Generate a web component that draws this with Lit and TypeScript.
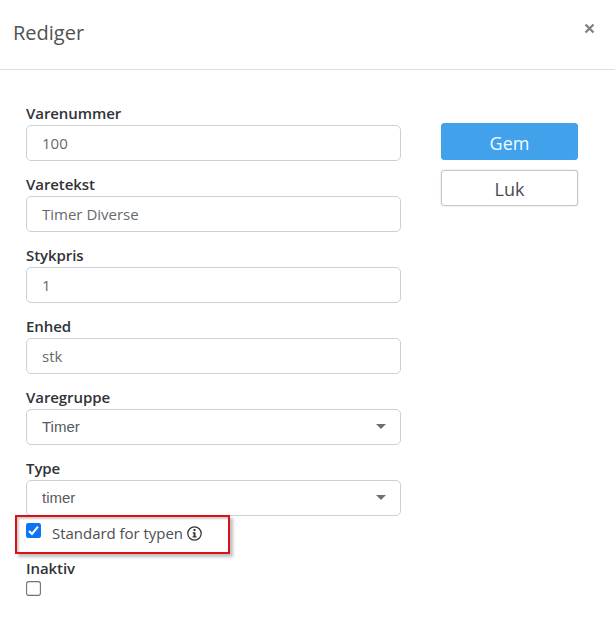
import { LitElement, html, css, svg } from "lit";
import { customElement, property } from "lit/decorators.js";

@customElement("form-field")
class FormField extends LitElement {
  @property() label = "";
  @property() value = "";
  @property({ type: Boolean }) select = false;

  static styles = css`
    :host { display: block; height: 56px; }
    .label { height: 20px; line-height: 16px; font-weight: 600; font-size: 15px; color: #303337; letter-spacing: -0.08px; white-space: nowrap; }
    .control { box-sizing: border-box; height: 36px; border: 1px solid #cdd0d2; border-radius: 5px; background: #fff; padding: 0 14px 0 15px; display: flex; align-items: center; justify-content: space-between; font-size: 15px; color: #65696d; }
    .select { font-family: "Liberation Sans", Arial, sans-serif; color: #565b60; padding-bottom: 1px; }
    .text { line-height: 20px; }
    .select .text { line-height: 17px; padding-bottom: 1px; }
    .arrow { width: 10px; height: 5px; display: block; }
  `;

  render() {
    return html`
      <div class="label">${this.label}</div>
      <div class="control ${this.select ? "select" : ""}">
        <span class="text">${this.value}</span>
        ${this.select
          ? html`<svg class="arrow" viewBox="0 0 10 5"><path d="M0 0h10L5 5z" fill="#6a7278" /></svg>`
          : ""}
      </div>
    `;
  }
}

@customElement("check-box")
class CheckBox extends LitElement {
  @property({ type: Boolean }) checked = false;

  static styles = css`
    :host { display: block; width: 15px; height: 15px; }
    svg { display: block; }
  `;

  render() {
    return html`<svg width="15" height="15" viewBox="0 0 15 15">
      ${this.checked
        ? svg`<rect width="15" height="15" rx="2.2" fill="#0a75f5" /><path d="M3 7.9l3 3.1 6-7.3" fill="none" stroke="#fff" stroke-width="2.1" />`
        : svg`<rect x=".6" y=".6" width="13.8" height="13.8" rx="2.2" fill="#fff" stroke="#707274" stroke-width="1.1" />`}
    </svg>`;
  }
}

@customElement("app-root")
class AppRoot extends LitElement {
  static styles = css`
    :host { display: block; box-sizing: border-box; height: 633px; overflow: hidden; background: #fff; font-family: "Open Sans", sans-serif; color: #4b4f53; }
    .header { box-sizing: border-box; height: 70px; border-bottom: 1px solid #dcdedf; display: flex; justify-content: space-between; padding: 18px 20px 0 13px; }
    .title { font-size: 20px; line-height: 29px; color: #505255; }
    .close { width: 11px; height: 11px; margin-top: 5px; display: block; }
    .body { display: flex; padding: 35px 37px 0 26px; gap: 40px; }
    .fields { width: 375px; display: flex; flex-direction: column; }
    form-field { margin-bottom: 15px; }
    form-field.last { margin-bottom: 0; }
    .highlight { box-sizing: border-box; width: 215px; height: 39px; margin: -1px 0 0 -11px; border: 2px solid #d81218; box-shadow: 3px 3px 3px rgba(0, 0, 0, .25), inset 2px 2px 2px rgba(0, 0, 0, .2); display: flex; padding: 6px 0 0 9px; position: relative; }
    .standard { font-size: 15px; line-height: 21px; margin-left: 11px; white-space: nowrap; letter-spacing: -0.03px; }
    .info { width: 15px; height: 15px; margin: 3px 0 0 3.5px; }
    .inactive { margin-top: 5px; height: 22px; line-height: 18px; font-size: 15px; font-weight: 600; color: #303337; letter-spacing: -0.08px; }
    .actions { width: 137px; padding-top: 18px; display: flex; flex-direction: column; gap: 10px; }
    .button { box-sizing: border-box; height: 36px; border: 1px solid #c5c6c8; border-radius: 3px; background: #fff; color: #484b4f; font: 18px/24px "Open Sans", sans-serif; padding: 1px 0 0; text-align: center; box-shadow: 0 0 2px rgba(0, 0, 0, .18); }
    .primary { height: 37px; padding-top: 2px; background: #42a1eb; border-color: #42a1eb; color: #effcff; box-shadow: none; font-weight: 500; }
  `;

  render() {
    return html`
      <div class="header">
        <div class="title">Rediger</div>
        <svg class="close" viewBox="0 0 11 11"><path d="M1.5 1.5l8 8M9.5 1.5l-8 8" stroke="#808080" stroke-width="2.3" /></svg>
      </div>
      <div class="body">
        <div class="fields">
          <form-field label="Varenummer" value="100"></form-field>
          <form-field label="Varetekst" value="Timer Diverse"></form-field>
          <form-field label="Stykpris" value="1"></form-field>
          <form-field label="Enhed" value="stk"></form-field>
          <form-field label="Varegruppe" value="Timer" select></form-field>
          <form-field class="last" label="Type" value="timer" select></form-field>
          <div class="highlight">
            <check-box checked></check-box>
            <span class="standard">Standard for typen</span>
            <svg class="info" viewBox="0 0 15 15">
              <circle cx="7.5" cy="7.5" r="6.7" fill="none" stroke="#303236" stroke-width="1.25" />
              <path d="M6.5 3h2v2h-2zM5.7 6.2h2.8v4h1v1.2H5.6v-1.2h1V7.4h-.9z" fill="#303236" />
            </svg>
          </div>
          <div class="inactive">Inaktiv</div>
          <check-box></check-box>
        </div>
        <div class="actions">
          <button class="button primary">Gem</button>
          <button class="button">Luk</button>
        </div>
      </div>
    `;
  }
}
